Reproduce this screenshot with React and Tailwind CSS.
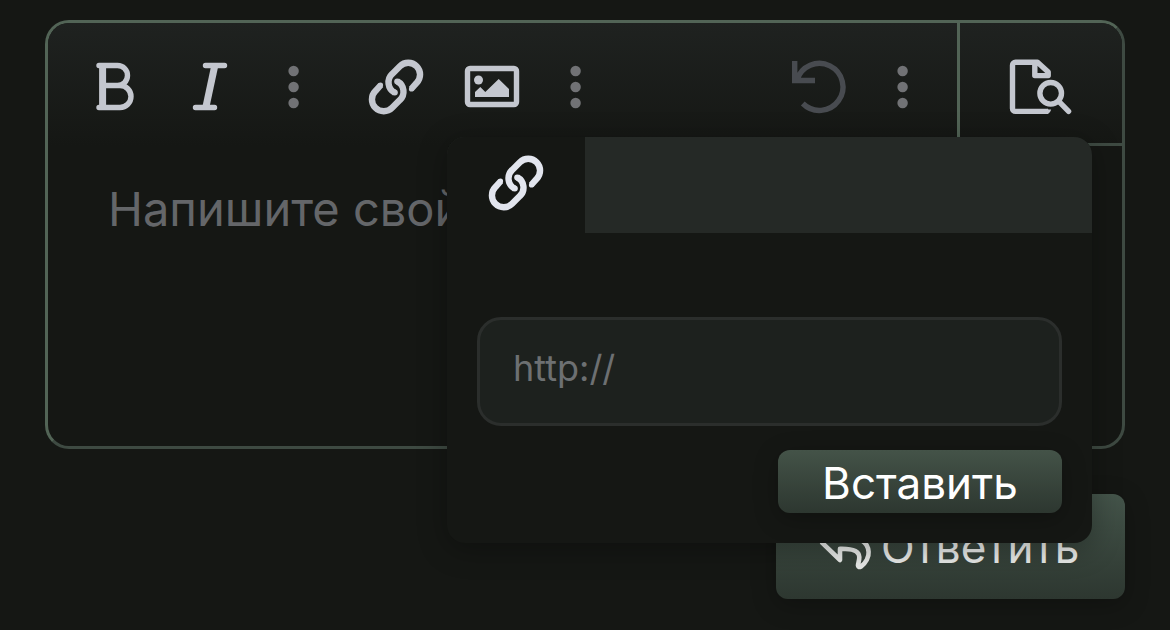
import { useState } from "react";

function Icon({ className, children }) {
    return (
        <svg
            viewBox="0 0 64 64"
            fill="none"
            stroke="currentColor"
            strokeWidth="5.4"
            strokeLinecap="round"
            strokeLinejoin="round"
            aria-hidden="true"
            className={`size-16 shrink-0 ${className ?? ""}`}
        >
            {children}
        </svg>
    );
}

const BoldIcon = () => (
    <Icon>
        <path d="M17 10.5H35.5a10 10 0 0 1 0 20H21M35.5 30.5H38a11 11 0 0 1 0 22H17" />
        <path d="M20.6 10.5v42" strokeWidth="7" strokeLinecap="butt" />
    </Icon>
);

const ItalicIcon = () => (
    <Icon>
        <path d="M27.5 10.5h19M17.5 52.5h19" />
        <path d="M36.8 10.5l-9 42" strokeWidth="7" strokeLinecap="butt" />
    </Icon>
);

const DotsIcon = () => (
    <Icon className="text-[#717275]">
        <g fill="currentColor" stroke="none">
            <circle cx="32.6" cy="16" r="5.2" />
            <circle cx="32.6" cy="32" r="5.2" />
            <circle cx="32.6" cy="48" r="5.2" />
        </g>
    </Icon>
);

const LinkIcon = () => {
    const half =
        "M47.2 34L52.6 27.9A11.8 11.8 0 0 0 35.9 11.2L28.2 18.9A11.6 11.6 0 0 0 30.6 37.6";
    return (
        <Icon>
            <g strokeWidth="6.4" strokeLinecap="butt">
                <path d={half} />
                <path d={half} transform="rotate(180 32 32)" />
            </g>
            <g fill="currentColor" stroke="none">
                <circle cx="30.8" cy="37.6" r="3" />
                <circle cx="33.2" cy="26.4" r="3" />
                <circle cx="47.5" cy="34" r="2.6" />
                <circle cx="16.5" cy="30" r="2.6" />
            </g>
        </Icon>
    );
};

const ImageIcon = () => (
    <Icon>
        <rect x="7.5" y="13.5" width="49" height="36" rx="2.5" />
        <g fill="currentColor" stroke="none">
            <circle cx="18.5" cy="25" r="4.5" />
            <path d="M15 42v-5l5.3-5 5 5 13.4-13L49 34v8z" />
        </g>
    </Icon>
);

const UndoIcon = () => (
    <Icon>
        <path
            d="M7.7 6v19.5H28M10 25A23.5 23.5 0 1 1 15.8 48.5"
            strokeLinecap="butt"
            strokeLinejoin="miter"
        />
    </Icon>
);

const PreviewIcon = () => (
    <Icon>
        <path
            d="M39 56.4H6.5a3 3 0 0 1-3-3V10.2a3 3 0 0 1 3-3H28.5L39.2 17V20.6H25.8V8"
            strokeLinecap="butt"
        />
        <path
            d="M38 53.7c1.500.6 2.500.8 4.200.9q-1.600 4.400-4.200 4.500z"
            fill="currentColor"
            stroke="none"
        />
        <circle cx="41.7" cy="38.3" r="10.8" />
        <path d="M49.6 46.2L59.6 56.4" />
    </Icon>
);

const ReplyIcon = () => (
    <Icon>
        <path
            d="M9 27.600L27 45V33.800C38 33.500 46 35 46.300 42C46.400 46 45 48 45 50.500Q45.500 53 48 51.500C53 48 56 42 55.600 37C55 27 46 21 28 21V10z"
            strokeWidth="4.600"
        />
    </Icon>
);

function ToolButton({ label, narrow, className, children }) {
    return (
        <button
            type="button"
            aria-label={label}
            className={`flex h-full items-center justify-center ${narrow ? "w-[70px]" : "w-24"} ${className ?? ""}`}
        >
            {children}
        </button>
    );
}

function LinkPopup() {
    const [url, setUrl] = useState("");

    return (
        <div className="absolute top-[114px] right-[30px] z-10 w-[645px] overflow-hidden rounded-[18px] bg-[#151714] shadow-[0_6px_30px_rgba(0,0,0,0.3)]">
            <div className="flex h-24 bg-[#252926]">
                <button
                    type="button"
                    aria-label="Ссылка"
                    className="flex w-[138px] items-center justify-center bg-[#151714] pb-1 text-[#e2e5ee]"
                >
                    <LinkIcon />
                </button>
            </div>
            <div className="px-[30px] pt-[84px] pb-[30px]">
                <input
                    type="text"
                    aria-label="URL"
                    placeholder="http://"
                    value={url}
                    onChange={(e) => setUrl(e.target.value)}
                    className="block h-[109px] w-full rounded-3xl border-3 border-[#2b2e2c] bg-[#1d211e] px-[33px] pb-2 text-[36px] text-[#c6c8d0] outline-none placeholder:text-[#6d7072]"
                />
                <div className="mt-6 flex justify-end">
                    <button
                        type="button"
                        className="h-[63px] w-[284px] rounded-xl bg-linear-to-b from-[#445348] to-[#2d3730] pt-0.5 text-[44px] leading-[60px] text-white shadow-[0_6px_24px_rgba(0,0,0,0.25)]"
                    >
                        Вставить
                    </button>
                </div>
            </div>
        </div>
    );
}

export default function App() {
    const [message, setMessage] = useState("");

    return (
        <main className="min-h-screen bg-[#151714] px-[45px] pt-5 pb-8 font-['Inter','Liberation_Sans',sans-serif]">
            <form onSubmit={(e) => e.preventDefault()}>
                <div className="relative rounded-3xl border-3 border-t-[#526456] border-r-[#3e4a42] border-b-[#3e4a42] border-l-[#526456]">
                    <div className="flex h-[123px] rounded-t-[21px] bg-linear-to-b from-[#1f2220] to-[#151714] text-[#c4c7cf]">
                        <div className="flex flex-1 gap-5 pt-2 pr-5 pb-[3px] pl-[18px]">
                            <div className="flex">
                                <ToolButton label="Жирный">
                                    <BoldIcon />
                                </ToolButton>
                                <ToolButton label="Курсив">
                                    <ItalicIcon />
                                </ToolButton>
                                <ToolButton label="Ещё" narrow>
                                    <DotsIcon />
                                </ToolButton>
                            </div>
                            <div className="flex">
                                <ToolButton label="Вставить ссылку">
                                    <LinkIcon />
                                </ToolButton>
                                <ToolButton label="Вставить изображение">
                                    <ImageIcon />
                                </ToolButton>
                                <ToolButton label="Ещё" narrow>
                                    <DotsIcon />
                                </ToolButton>
                            </div>
                            <div className="ml-auto flex">
                                <ToolButton
                                    label="Отменить"
                                    className="text-[#484b50]"
                                >
                                    <UndoIcon />
                                </ToolButton>
                                <ToolButton label="Ещё" narrow>
                                    <DotsIcon />
                                </ToolButton>
                            </div>
                        </div>
                        <button
                            type="button"
                            aria-label="Предпросмотр"
                            className="flex w-[165px] items-center justify-center border-b-3 border-l-3 border-b-[#3e4a42] border-l-[#526456] pt-2"
                        >
                            <PreviewIcon />
                        </button>
                    </div>
                    <textarea
                        aria-label="Сообщение"
                        placeholder="Напишите свой ответ..."
                        value={message}
                        onChange={(e) => setMessage(e.target.value)}
                        className="block h-[300px] w-full resize-none bg-transparent px-[60px] pt-[33px] text-[47px] leading-[60px] text-[#c4c7cf] outline-none placeholder:text-[#646669]"
                    />
                    <LinkPopup />
                </div>

                <div className="mt-[45px] flex justify-end">
                    <button
                        type="submit"
                        className="flex h-[105px] w-[349px] items-center gap-1 rounded-xl bg-linear-to-b from-[#44544a] to-[#2d3730] pl-[37px] text-[44px] text-[#e8eae8] shadow-[0_6px_24px_rgba(0,0,0,0.25)]"
                    >
                        <ReplyIcon />
                        Ответить
                    </button>
                </div>
            </form>
        </main>
    );
}
